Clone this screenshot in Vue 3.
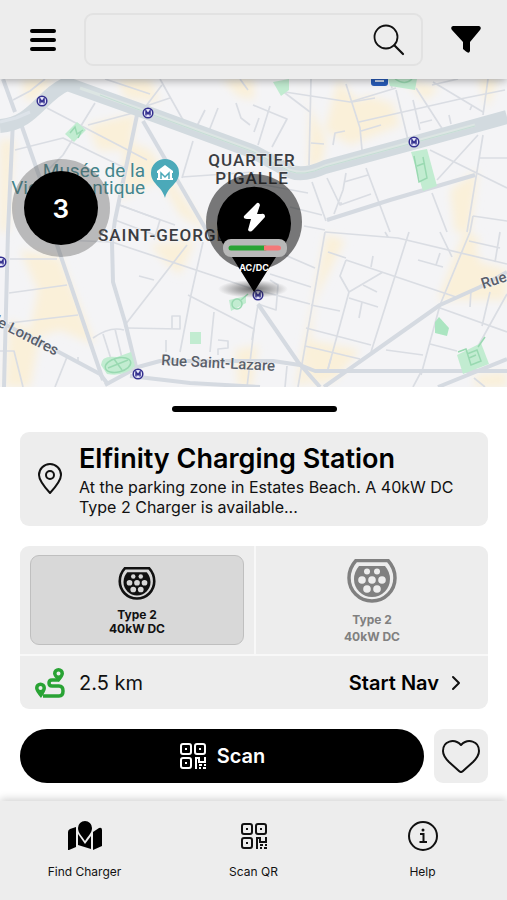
<script setup>
import { ref } from 'vue'

const query = ref('')
const selected = ref(0)
const favourite = ref(false)

const connectors = [
  { type: 'Type 2', power: '40kW DC' },
  { type: 'Type 2', power: '40kW DC' }
]

const metroStops = [
  [42, 101], [148, 113], [414, 142], [1, 262], [138, 374], [258, 295]
]

const blocks = [
  'M22 79H55L35 100H25Z', 'M118 79H150L160 102L125 98Z', 'M222 79H254V100L238 96Z',
  'M0 140H14L8 232H0Z', 'M88 125L136 114L130 150L98 150Z', 'M125 140L150 150L208 232L180 215L160 180L120 200Z',
  'M20 250L60 258L95 345L60 330L28 340L38 290Z', 'M10 320L40 335L30 387H5Z', 'M150 245L195 240L180 275L165 262Z',
  'M297 79L326 140L322 163L308 169L310 110Z', 'M338 79L355 98L395 110L400 125L350 145L325 130Z',
  'M365 95L398 105L358 119Z', 'M402 79L440 88L425 100Z', 'M478 79H498L488 108Z',
  'M450 190L478 170L470 232H455Z', 'M326 234L345 240L315 300L306 385L296 385Z',
  'M308 340L360 350L335 380L310 385Z', 'M472 232L480 262L507 270V300L440 300L455 270Z', 'M438 300L464 232L480 238L455 300Z',
  'M235 350L258 345L252 387H238Z', 'M475 375L507 372V387H475Z', 'M210 225L235 230L222 245Z'
]

const minorRoads = [
  'M95 103L63 155L48 170', 'M47 108L147 160', 'M88 125L137 112', 'M13 100L30 91L45 79',
  'M160 79L183 120', 'M162 85L146 106L170 98', 'M193 141L182 178', 'M182 177L254 172',
  'M15 150L63 138L125 168L119 205L175 225', 'M105 79L150 94', 'M120 205L160 220L154 240M115 220L160 237',
  'M205 110L195 130M218 108L207 136M236 103L241 118L250 125M240 79L248 90',
  'M10 259H57M9 293L67 285M9 323L78 315', 'M60 240L112 242L253 289L310 304',
  'M187 245L125 325M203 242L191 295L180 352', 'M188 295L254 329L247 387', 'M127 328L180 329V316H172V328',
  'M214 312L210 352M218 340L228 341V348L218 349V355', 'M93 338Q110 326 124 330M103 334L112 362M115 329L122 358',
  'M0 351H14L23 387M67 357L55 387M78 357L78 363', 'M139 276L154 280M166 340V352',
  'M311 79L309 165', 'M346 84L360 128L362 150', 'M281 90L310 112', 'M253 105L287 119L272 147',
  'M259 118L254 132M270 106L258 145', 'M285 92L350 102L396 88', 'M359 122L460 99L505 90', 'M352 102L375 98',
  'M396 90L408 140M413 100L420 130M420 123L432 120M416 88L443 130M433 82L483 112M488 79L483 115M432 85L458 79',
  'M361 131L381 125M311 143L324 144M333 145L335 133L345 131M472 105L470 110M449 115L451 124',
  'M430 150L507 188M478 135L437 180M483 135L467 232M480 158H507', 'M366 168L390 232M312 182L326 221',
  'M327 178L340 205L371 194M346 173L343 190L334 214M344 182L368 175M339 203L342 203',
  'M432 193L447 232M473 216L507 221M470 232L473 216', 'M254 183L308 193M290 207L322 215M304 226L325 230',
  'M325 232L298 387', 'M278 252L315 268M270 274L311 287M258 304L276 310L278 285L270 280',
  'M325 232L398 238L507 264M409 232L371 352M390 79L392 88M385 232L388 237',
  'M470 232L440 305L421 375M469 241L500 248M500 232L495 262M440 232L452 257M418 260L443 267M440 253L436 265',
  'M346 260L456 297M346 260L340 276L349 292L383 272M349 292L328 369M311 305L340 311M306 328L371 345M305 346L360 359',
  'M363 285L377 292M362 302L359 318M349 298L378 307M373 256L371 267M328 252L346 258',
  'M440 308L507 332M430 344L457 351M386 350L423 355M490 292L482 326M507 294L477 348M471 290L470 307',
  'M258 305L252 340M287 366L285 387M328 369L331 358M421 372L413 387M474 378L485 387'
]

const streets = [
  'M3 79L15 112', 'M13 120L8 232L4 387', 'M20 121L44 190L57 245L103 380', 'M137 115L115 220L112 242L113 282L125 322L136 367',
  'M143 121L208 233', 'M0 322L40 342L100 374L107 383', 'M105 385L138 367L160 361L273 361L300 365L315 371L507 371',
  'M130 376L190 383L260 387', 'M258 304L298 362L320 387', 'M327 220L390 200L475 175',
  'M324 387L440 305L480 287L507 272', 'M438 387L507 359'
]
</script>

<template>
  <div class="app">
    <header class="topbar">
      <button class="icon-btn" type="button" aria-label="Menu">
        <svg width="26" height="26" viewBox="0 0 26 26"><path d="M2 4H24M2 13H24M2 22H24" stroke="#000" stroke-width="4" stroke-linecap="round" /></svg>
      </button>
      <form class="search" role="search" @submit.prevent>
        <input v-model="query" type="search" aria-label="Search chargers" />
        <button class="icon-btn" type="submit" aria-label="Search">
          <svg width="32" height="32" viewBox="0 0 32 32" fill="none" stroke="#111" stroke-width="1.8" stroke-linecap="round"><circle cx="13" cy="13" r="11.5" /><path d="M21.3 21.3L30 30" stroke-width="2.2" /></svg>
        </button>
      </form>
      <button class="icon-btn" type="button" aria-label="Filter">
        <svg width="30" height="27" viewBox="0 0 30 27"><path d="M2 0H28Q31 1 29 4L19 16V25Q18 28 15 25.500L12 23V16L1 4Q-1 1 2 0Z" /></svg>
      </button>
    </header>

    <main>
      <section class="map" aria-label="Map">
        <svg class="map-art" viewBox="0 79 507 308" preserveAspectRatio="xMidYMid slice">
          <defs>
            <filter id="soft" x="-10%" y="-10%" width="120%" height="120%"><feGaussianBlur stdDeviation="4" /></filter>
          </defs>
          <rect y="79" width="507" height="308" fill="#f4f4f6" />
          <g fill="#faf0d9" filter="url(#soft)"><path v-for="(d, i) in blocks" :key="i" :d="d" /></g>
          <g fill="none" stroke="#dadde3" stroke-width="1.700" stroke-linejoin="round"><path v-for="(d, i) in minorRoads" :key="i" :d="d" /></g>
          <g fill="none" stroke="#d5dae1" stroke-width="4" stroke-linejoin="round"><path v-for="(d, i) in streets" :key="i" :d="d" /></g>
          <g fill="none" stroke-linejoin="round">
            <path d="M0 126C33 124 42 94 67 84L137 109L254 152L289 171Q303 177 325 167L413 143L507 117" stroke="#d2dadf" stroke-width="14" />
            <path d="M80 88L137 108L254 151L289 170Q303 176 325 166L413 142L475 125" stroke="#dce5e3" stroke-width="3" />
            <path d="M100 95L137 109L254 152L289 171Q303 177 325 167L413 143L475 126" stroke="#c5ded5" />
            <path d="M0 122L16 118L30 112" stroke="#dde3e9" stroke-width="3" />
          </g>
          <g fill="#c2ecd1">
            <path d="M65 134L77 122L86 130L74 142Z" /><path d="M273 82L289 79V90L281 96Z" />
            <path d="M388 79H417L415 90L390 86Z" /><path d="M411 152L427 149L437 186L423 191Z" />
            <path d="M101 365Q101 355 117 357L131 352L135 366Q125 377 107 374Z" />
            <path d="M190 332H201V344H190Z" /><path d="M435 322L439 317L449 328L447 336L435 333Z" fill="#abe5c1" />
            <path d="M457 355L481 343L489 364L463 374Z" /><path d="M229 300L246 296V303L231 311Z" />
          </g>
          <g fill="none" stroke="#99d9b1" stroke-width="1.500">
            <path d="M70 133L75 127L77 134L83 130M78 138L81 132" /><path d="M395 79Q405 86 412 79" />
            <path d="M414 156L419 182L427 178L423 157M417 166L425 163" />
            <ellipse cx="118" cy="365" rx="13" ry="7" transform="rotate(-14 118 365)" /><path d="M108 368L118 364L128 360M114 359L122 370" />
            <circle cx="237" cy="304" r="5" /><path d="M241 300L248 294" />
            <path d="M458 352L466 349L471 365L481 361L477 350L467 354M469 358L476 355M478 347L485 337" />
          </g>
          <rect x="371" y="75" width="17" height="11" rx="3" fill="#285bb8" /><path d="M375 81H384" stroke="#fff" stroke-width="1.500" />
          <g v-for="([x, y], i) in metroStops" :key="i" fill="#e9e9fa" stroke="#34308f" stroke-width="1.500">
            <circle :cx="x" :cy="y" r="4.800" /><path :d="`M${x - 2} ${y + 2.5}V${y - 2}L${x} ${y + 1}L${x + 2} ${y - 2}V${y + 2.5}`" fill="none" />
          </g>
          <path d="M165 198C162 186 151 184 151 173A14 14 0 1 1 179 173C179 184 168 186 165 198Z" fill="#4ba9b9" />
          <path d="M157 171L165 165L173 171V173H157ZM158 173H172V178H173V180H157V178H158Z" fill="#fff" />
          <path d="M161 179V173L165 177L169 173V179" fill="none" stroke="#4ba9b9" stroke-width="1.500" />
          <g class="label place"><text x="145" y="177" text-anchor="end">Musée de la</text><text x="145" y="194" text-anchor="end">Vie Romantique</text></g>
          <g class="label area"><text x="252" y="166" text-anchor="middle">QUARTIER</text><text x="252" y="184" text-anchor="middle">PIGALLE</text><text x="98" y="241">SAINT-GEORGES</text></g>
          <g class="label street">
            <text transform="translate(-11 322) rotate(27)">de Londres</text>
            <text transform="translate(161 365) rotate(3)">Rue Saint-Lazare</text>
            <text transform="translate(483 289) rotate(-18)">Rue</text>
          </g>
        </svg>

        <button class="marker cluster" type="button" aria-label="3 chargers"><span>3</span></button>
        <button class="marker station" type="button" aria-label="AC/DC charger">
          <svg width="98" height="126" viewBox="204 174 98 126">
            <defs><radialGradient id="ground"><stop offset="0" stop-color="#222" stop-opacity=".65" /><stop offset="1" stop-color="#222" stop-opacity="0" /></radialGradient></defs>
            <ellipse cx="252" cy="290" rx="35" ry="9" fill="url(#ground)" />
            <circle cx="253" cy="223" r="48" fill="#111" fill-opacity=".55" />
            <path d="M253 293L226 250A37 37 0 1 1 280 250Z" />
            <path d="M256 204L243 217Q242 220 246 220H250L247 231Q249 234 252 231L264 218Q264 214 260 215H256L259 206Q258 203 256 204Z" fill="#fff" />
            <rect x="222" y="240" width="64" height="18" rx="8" fill="#b8b8b8" />
            <path d="M230 249H264" stroke="#29a334" stroke-width="5" stroke-linecap="round" /><path d="M263 246.500H277Q280 246.500 280 249T277 251.500H263Z" fill="#f47878" />
            <text x="253" y="272" text-anchor="middle" class="pin-text">AC/DC</text>
          </svg>
        </button>
      </section>

      <section class="sheet">
        <div class="handle"></div>

        <article class="station-card">
          <svg width="24" height="32" viewBox="0 0 24 32" fill="none" stroke="#111" stroke-width="2"><path d="M12 30Q1 18 1 12A11 11 0 0 1 23 12Q23 18 12 30Z" stroke-linejoin="round" /><circle cx="12" cy="12" r="4" /></svg>
          <div>
            <h1>Elfinity Charging Station</h1>
            <p>At the parking zone in Estates Beach. A 40kW DC Type 2 Charger is available...</p>
          </div>
        </article>

        <section class="options">
          <div class="connectors">
            <div v-for="(c, i) in connectors" :key="i" class="slot">
              <button class="connector" :class="{ active: selected === i }" type="button" :aria-pressed="selected === i" @click="selected = i">
                <svg class="plug" viewBox="0 0 50 44">
                  <path d="M9 1.500H41Q48 9 48 19A23 23 0 0 1 2 19Q2 9 9 1.500Z" fill="none" stroke="currentColor" stroke-width="3.500" />
                  <path d="M12 7H38Q43 13 43 20A18 18 0 0 1 7 20Q7 13 12 7Z" fill="currentColor" />
                  <g class="holes"><circle cx="20" cy="12.500" r="3" /><circle cx="30" cy="12.500" r="3" /><circle cx="15" cy="21" r="3.800" /><circle cx="25" cy="21" r="3.800" /><circle cx="35" cy="21" r="3.800" /><circle cx="20" cy="30" r="3.800" /><circle cx="30" cy="30" r="3.800" /></g>
                </svg>
                <span class="spec">{{ c.type }}<br />{{ c.power }}</span>
              </button>
            </div>
          </div>
          <div class="travel">
            <svg width="30" height="30" viewBox="0 0 30 30">
              <path d="M24 12H17Q14 12 14 15T17 18H24Q28 18 28 23T24 28H8" fill="none" stroke="#29a334" stroke-width="3.500" />
              <path fill-rule="evenodd" fill="#29a334" d="M24 14Q18 8 18 5.500A5.500 5.500 0 0 1 29 5.500Q29 8 24 14ZM23.500 3.500A2 2 0 1 0 23.500 7.500A2 2 0 1 0 23.500 3.500Z" />
              <path fill-rule="evenodd" fill="#29a334" d="M6 30Q0 23 0 20A5.500 5.500 0 0 1 11 20Q11 23 6 30ZM5.500 18A2 2 0 1 0 5.500 22A2 2 0 1 0 5.500 18Z" />
            </svg>
            <span class="distance">2.5 km</span>
            <button class="nav-btn" type="button">Start Nav
              <svg width="10" height="16" viewBox="0 0 10 16" fill="none" stroke="#111" stroke-width="2" stroke-linecap="round" stroke-linejoin="round"><path d="M2 2L8 8L2 14" /></svg>
            </button>
          </div>
        </section>

        <div class="actions">
          <button class="scan" type="button">
            <svg width="28" height="28" viewBox="0 0 28 28" fill="none" stroke="currentColor" stroke-width="2"><rect x="2" y="2" width="10" height="10" rx="2" /><rect x="16" y="2" width="10" height="10" rx="2" /><rect x="2" y="16" width="10" height="10" rx="2" /><path d="M6 7H8M20 7H22M6 21H8M17 27V16H20V20H23M22 20H26V15M20 23H23M20 26H22M25 23H27M24 26H27" /></svg>
            Scan
          </button>
          <button class="heart" type="button" aria-label="Favourite" :aria-pressed="favourite" @click="favourite = !favourite">
            <svg width="38" height="34" viewBox="0 0 38 34" fill="none" stroke="#111" stroke-width="2" stroke-linejoin="round"><path d="M19 6C12-1 1 2 1 12C1 17 4 20 7 23L17 32Q19 34 21 32L31 23C34 20 37 17 37 12C37 2 26-1 19 6Z" /></svg>
          </button>
        </div>
      </section>
    </main>

    <nav class="tabs">
      <a href="#find">
        <svg width="34" height="32" viewBox="0 0 34 32"><path d="M17 1A7 7 0 0 0 10 8C10 13 14 16 17 21C20 16 24 13 24 8A7 7 0 0 0 17 1Z" /><path d="M0 12Q0 10 2 9L8 7V27L1 30H0ZM10 14L17 24L23 16V29L10 25ZM25 12L31 8Q34 7 34 10V26L25 30Z" /></svg>
        Find Charger
      </a>
      <a href="#scan">
        <svg width="28" height="32" viewBox="0 -2 28 32" fill="none" stroke="currentColor" stroke-width="2"><rect x="2" y="2" width="10" height="10" rx="2" /><rect x="16" y="2" width="10" height="10" rx="2" /><rect x="2" y="16" width="10" height="10" rx="2" /><path d="M6 7H8M20 7H22M6 21H8M17 27V16H20V20H23M22 20H26V15M20 23H23M20 26H22M25 23H27M24 26H27" /></svg>
        Scan QR
      </a>
      <a href="#help">
        <svg width="32" height="32" viewBox="0 0 32 32" fill="none" stroke="#111" stroke-width="2"><circle cx="16" cy="16" r="14" /><path d="M13 14H16.500V22M12.500 22H20" /><circle cx="16" cy="10" r="1.500" fill="#111" stroke="none" /></svg>
        Help
      </a>
    </nav>
  </div>
</template>

<style>
body { margin: 0; background: #fff; }
</style>

<style scoped>
.app { display: flex; flex-direction: column; min-height: 100vh; color: #111; background: #fff; font-family: Inter, "Liberation Sans", sans-serif; }
.app *, .app { box-sizing: border-box; }
button { padding: 0; border: 0; background: none; color: inherit; font: inherit; cursor: pointer; }
svg { flex: none; display: block; }
.topbar { position: relative; z-index: 2; display: flex; align-items: center; gap: 28px; padding: 13px 26px 13px 30px; background: #ededed; box-shadow: 0 2px 8px rgba(0, 0, 0, .3); }
.search { flex: 1; min-width: 0; display: flex; align-items: center; height: 53px; padding: 0 16px; border: 2px solid #e2e2e2; border-radius: 9px; }
.search input { flex: 1; min-width: 0; border: 0; outline: 0; background: none; font: inherit; appearance: none; }
main { flex: 1; display: flex; flex-direction: column; }
.map { position: relative; overflow: hidden; }
.map-art { width: 100%; height: auto; }
.label { font-family: Roboto, sans-serif; paint-order: stroke; stroke: #f5f5f6; stroke-width: 1px; }
.place { font-size: 19px; fill: #43858b; }
.area { font-size: 17px; font-weight: 500; letter-spacing: 1px; fill: #3b3d42; }
.street { font-size: 15px; font-weight: 500; fill: #5a606a; }
.marker { position: absolute; transform: translate(-50%, -50%); }
.cluster { left: 12%; top: 42%; display: grid; place-items: center; width: 98px; height: 98px; border-radius: 50%; background: rgba(90, 90, 90, .38); }
.cluster span { display: grid; place-items: center; width: 74px; height: 74px; border-radius: 50%; background: #000; color: #fff; font-size: 26px; font-weight: 600; }
.station { left: 50%; top: 51%; }
.pin-text { font-size: 9px; font-weight: 700; fill: #fff; }
.sheet { display: flex; flex-direction: column; gap: 20px; padding: 19px 19px 18px 20px; }
.handle { align-self: center; width: 165px; height: 6px; border-radius: 3px; background: #000; }
.station-card { display: flex; align-items: center; gap: 17px; min-height: 94px; padding: 8px 18px; border-radius: 9px; background: #ededed; }
h1 { margin: 0; font-size: 27px; font-weight: 600; line-height: 36px; color: #000; }
p { margin: 0; font-size: 16px; line-height: 20px; }
.options { overflow: hidden; border-radius: 9px; background: #ededed; }
.connectors { display: grid; grid-template-columns: 1fr 1fr; border-bottom: 2px solid #f8f8f8; }
.slot { padding: 9px 10px; }
.slot + .slot { border-left: 2px solid #f8f8f8; }
.connector { display: flex; flex-direction: column; align-items: center; justify-content: center; gap: 8px; width: 100%; height: 90px; border: 1px solid transparent; border-radius: 9px; color: #808080; font-size: 12px; font-weight: 700; line-height: 17px; }
.slot .connector { padding-top: 3px; }
.connector.active { border-color: #bfbfbf; background: #d8d8d8; color: #111; line-height: 14px; }
.plug { width: 50px; height: 44px; }
.active .plug { width: 38px; height: 33px; }
.holes { fill: #ededed; }
.active .holes { fill: #d8d8d8; }
.travel { display: flex; align-items: center; gap: 14px; min-height: 53px; padding: 0 27px 0 15px; font-size: 20px; }
.nav-btn { display: flex; align-items: center; gap: 12px; margin-left: auto; color: #000; font-weight: 600; }
.actions { display: flex; gap: 10px; }
.scan { flex: 1; display: flex; align-items: center; justify-content: center; gap: 10px; height: 54px; border-radius: 27px; background: #000; color: #fff; font-size: 20px; font-weight: 600; }
.heart { display: grid; place-items: center; width: 54px; height: 54px; border-radius: 9px; background: #ededed; }
.tabs { display: grid; grid-template-columns: repeat(3, 1fr); padding: 19px 0; background: #ededed; box-shadow: 0 -2px 8px rgba(0, 0, 0, .18); }
.tabs a { display: flex; flex-direction: column; align-items: center; gap: 11px; color: #111; text-decoration: none; font-size: 12px; line-height: 18px; }
</style>
